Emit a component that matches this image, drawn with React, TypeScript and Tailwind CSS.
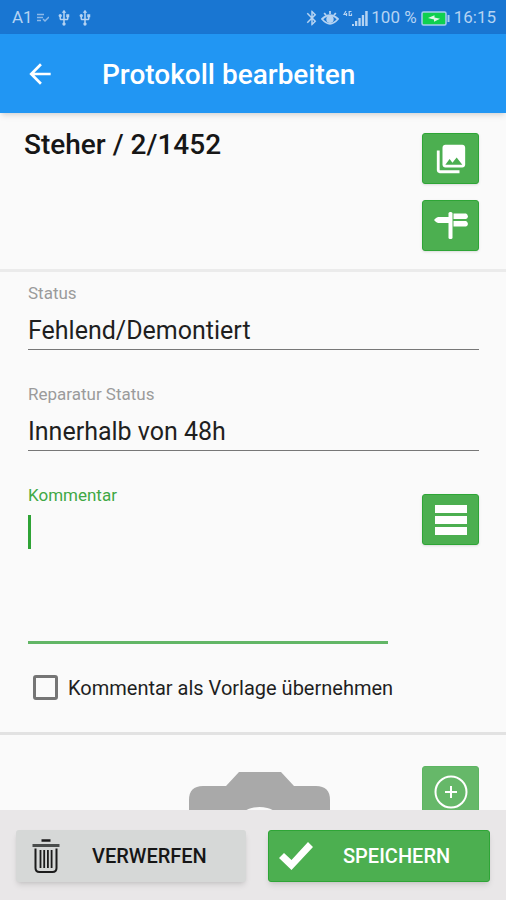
import { ReactNode, useState } from "react"
import { MdArrowBack, MdBluetooth, MdPhotoLibrary, MdUsb } from "react-icons/md"

type ToolButtonProps = {
  label: string
  faded?: boolean
  children: ReactNode
}

function ToolButton({ label, faded, children }: ToolButtonProps) {
  return (
    <button
      type="button"
      aria-label={label}
      className={
        "flex h-[51px] w-[57px] shrink-0 items-center justify-center rounded-[3px] border text-white " +
        (faded ? "border-[#5db562] bg-[#66b869]" : "border-[#2ea536] bg-[#4caf50] shadow-sm")
      }
    >
      {children}
    </button>
  )
}

function SignpostIcon() {
  return (
    <svg width="34" height="28" viewBox="0 0 34 28" fill="currentColor">
      <rect x="14.500" y="0" width="4" height="27" rx="1.500" />
      <path d="M14 5H4Q2 5.500 0 8Q2 10.500 4 11H14z" />
      <path d="M19.500 1.500H32Q33.500 2 34 4.500Q33.500 6.500 32 7H19.500z" />
      <path d="M19.500 9H32Q33.500 9.500 34 12Q33.500 14 32 14.500H19.500z" />
      <path d="M13 5h5v6h-5z" />
    </svg>
  )
}

function ListIcon() {
  return (
    <svg width="32" height="30" viewBox="0 0 32 30" fill="currentColor">
      <path d="M0 0h32v8H0zM0 11h32v8H0zM0 22h32v8H0z" />
    </svg>
  )
}

function AddIcon() {
  return (
    <svg width="34" height="34" viewBox="0 0 34 34" fill="none" stroke="currentColor" strokeWidth="2">
      <circle cx="17" cy="17" r="15.500" />
      <path d="M17 11v12M11 17h12" />
    </svg>
  )
}

function CameraIcon() {
  return (
    <svg width="141" height="110" viewBox="0 0 141 110" fill="#a9a9a9">
      <path
        fillRule="evenodd"
        d="M50 0H92L105 14H127Q141 14 141 28V96Q141 110 127 110H14Q0 110 0 96V28Q0 14 14 14H37zM70.500 35a30 30 0 1 0 0.010 0z"
      />
    </svg>
  )
}

function TrashIcon() {
  return (
    <svg width="28" height="34" viewBox="0 0 28 34" fill="none" stroke="#1c1c1c" strokeWidth="2">
      <path d="M9.500 1.500h9" strokeWidth="2.500" />
      <path d="M0.500 6.500h27" stroke="#4a4d4c" strokeWidth="3" />
      <path d="M3.500 9.500V29Q3.500 33 7.500 33H20.500Q24.500 33 24.500 29V9.500" />
      <path d="M8.500 11v18M12.200 11v18M15.900 11v18M19.600 11v18" strokeWidth="1.800" />
    </svg>
  )
}

function CheckIcon() {
  return (
    <svg width="34" height="28" viewBox="0 0 34 28" fill="currentColor">
      <path d="M0 16L5 11L12.500 18L29 0L34 5L12.500 28z" />
    </svg>
  )
}

function EyeIcon() {
  return (
    <svg width="18" height="16" viewBox="0 0 18 16" fill="none" stroke="currentColor" strokeWidth="1.800">
      <path d="M1 9Q9 1.500 17 9Q9 18.500 1 9z" />
      <circle cx="9" cy="9.300" r="2.800" fill="currentColor" />
      <path d="M9 1v3M3.200 3l1.800 2.200M14.800 3L13 5.200" />
    </svg>
  )
}

function SignalIcon() {
  return (
    <svg width="26" height="17" viewBox="0 0 26 17" fill="currentColor">
      <path
        d="M3 1L1 4.500H4.200M3.500 3v3M8.500 1.500H6.200V5.500H8.500V3.500"
        fill="none"
        stroke="currentColor"
        strokeWidth="1.200"
      />
      <path d="M9 14h2v2H9zM12 11h2.300v5H12zM15.400 8h2.300v8h-2.300zM18.800 5h2.300v11h-2.300zM22.200 1h2.500v15h-2.500z" />
    </svg>
  )
}

function BatteryIcon() {
  return (
    <svg width="29" height="15" viewBox="0 0 29 15">
      <rect x="1" y="1" width="24" height="13" rx="1.500" fill="#0fd04f" stroke="#a5cdf0" strokeWidth="1.500" />
      <path d="M26.500 4h2v7h-2z" fill="#a5cdf0" />
      <path d="M7 7L13.500 4.200V6.500L19 7.800L13 10.800V8.500z" fill="#dff7e8" />
    </svg>
  )
}

function StatusBar() {
  return (
    <div className="flex h-[34px] shrink-0 items-center justify-between bg-[#1976d2] pt-0.5 pr-2.5 pl-3 text-[17px] text-[#b5d3f2]">
      <div className="flex items-center">
        <span>A1</span>
        <svg className="ml-1" width="12" height="10" viewBox="0 0 12 10" fill="none" stroke="#8db9e8" strokeWidth="1.500">
          <path d="M0 1.500h7M0 4.500h6M0 7.500h4M6 6l2 2l4-4" />
        </svg>
        <MdUsb className="ml-1.5" size={18} />
        <MdUsb className="ml-[3px]" size={18} />
      </div>
      <div className="flex items-center">
        <MdBluetooth size={18} />
        <EyeIcon />
        <span className="ml-1"><SignalIcon /></span>
        <span className="ml-0.5">100 %</span>
        <span className="mx-1"><BatteryIcon /></span>
        <span>16:15</span>
      </div>
    </div>
  )
}

function Field({ id, label, value }: { id: string; label: string; value: string }) {
  return (
    <div className="flex flex-col gap-2.5">
      <label htmlFor={id} className="text-[17px] leading-5 text-[#9b9b9b]">{label}</label>
      <input
        id={id}
        type="text"
        defaultValue={value}
        className="h-[37px] w-full border-b border-[#777777] text-[25px] text-[#1f1f1f] outline-none"
      />
    </div>
  )
}

export default function App() {
  const [asTemplate, setAsTemplate] = useState(false)

  return (
    <div className="flex h-screen flex-col bg-[#fafafa] font-[Roboto,sans-serif]">
      <StatusBar />

      <header className="z-10 flex h-[79px] shrink-0 items-center bg-[#2196f3] px-6 text-white shadow-md">
        <button type="button" aria-label="Zurück" className="flex w-[78px] items-center">
          <MdArrowBack size={32} />
        </button>
        <h1 className="pt-0.5 text-[28px] font-medium">Protokoll bearbeiten</h1>
      </header>

      <main className="min-h-0 flex-1 overflow-hidden">
        <section className="flex justify-between border-b-3 border-[#ebebeb] pt-5 pr-[27px] pb-[18px] pl-6">
          <h2 className="text-[28px] leading-6 font-medium text-[#161616]">Steher / 2/1452</h2>
          <div className="flex flex-col gap-4">
            <ToolButton label="Fotos">
              <MdPhotoLibrary size={34} />
            </ToolButton>
            <ToolButton label="Standort">
              <SignpostIcon />
            </ToolButton>
          </div>
        </section>

        <section className="border-b-3 border-[#e2e2e2] pt-[11px] pr-[27px] pb-8 pl-7">
          <div className="flex flex-col gap-[34px]">
            <Field id="status" label="Status" value="Fehlend/Demontiert" />
            <Field id="repair" label="Reparatur Status" value="Innerhalb von 48h" />

            <div className="flex gap-[34px]">
              <div className="relative flex flex-1 flex-col gap-2.5">
                <label htmlFor="comment" className="text-[17px] leading-5 text-[#3fa845]">Kommentar</label>
                <textarea
                  id="comment"
                  className="h-[129px] w-full resize-none border-b-3 border-[#62b666] text-[25px] text-[#1f1f1f] caret-transparent outline-none"
                />
                <span className="absolute top-[30px] left-0 h-[34px] w-[3px] bg-[#2fa336]" />
              </div>
              <div className="pt-[9px]">
                <ToolButton label="Vorlagen">
                  <ListIcon />
                </ToolButton>
              </div>
            </div>
          </div>

          <label className="mt-[31px] flex items-center gap-2.5 pl-[5px] text-[20px] leading-6 text-[#1f1f1f]">
            <input
              type="checkbox"
              checked={asTemplate}
              onChange={(e) => setAsTemplate(e.target.checked)}
              className="size-[25px] appearance-none rounded-[3px] border-[3px] border-[#757575] checked:bg-[#4caf50]"
            />
            Kommentar als Vorlage übernehmen
          </label>
        </section>

        <section className="grid grid-cols-[68px_1fr_57px] pt-[31px] pr-[27px] pl-7">
          <div className="col-start-2 flex justify-center pt-1.5">
            <CameraIcon />
          </div>
          <ToolButton label="Foto hinzufügen" faded>
            <AddIcon />
          </ToolButton>
        </section>
      </main>

      <footer className="grid shrink-0 grid-cols-[230fr_222fr] gap-[22px] bg-[#e9e7e8] px-4 pt-5 pb-[18px] text-[20px] font-medium">
        <button type="button" className="flex h-[52px] items-center gap-8 rounded-[3px] bg-[#d6d8d7] pl-4 text-[#161616] shadow-md">
          <TrashIcon />
          <span>VERWERFEN</span>
        </button>
        <button type="button" className="flex h-[52px] items-center gap-[30px] rounded-[3px] border border-[#2ea536] bg-[#4caf50] pl-2.5 text-white shadow-md">
          <CheckIcon />
          <span>SPEICHERN</span>
        </button>
      </footer>
    </div>
  )
}
